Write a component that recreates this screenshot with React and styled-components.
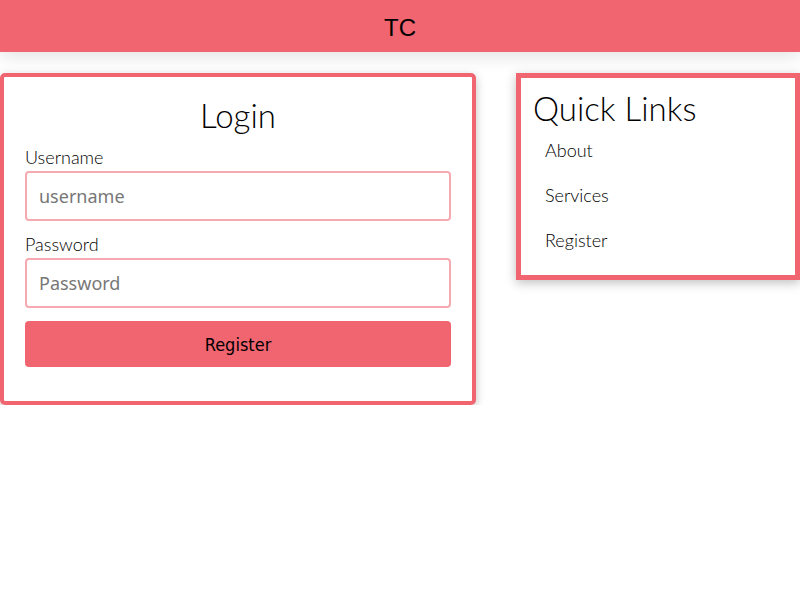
import React from 'react';
import styled, { createGlobalStyle } from 'styled-components';

const GlobalStyle = createGlobalStyle`
  body {
    margin: 0;
    background: #ffffff;
    color: #000;
    font-family: "Lato", "Open Sans", sans-serif;
  }
`;

const Header = styled.header`
  height: 52px;
  box-sizing: border-box;
  padding-top: 3px;
  background-color: #f06570;
  display: flex;
  align-items: center;
  justify-content: center;
  box-shadow: 0 4px 18px rgba(0, 0, 0, 0.12);
  font-family: "Liberation Sans", Arial, sans-serif;
  font-size: 24px;
`;

const Main = styled.main`
  display: flex;
  align-items: flex-start;
  gap: 40px;
  padding-top: 21px;
`;

const LoginCard = styled.form`
  width: 476px;
  box-sizing: border-box;
  border: 4px solid #f06570;
  border-radius: 5px;
  padding: 18px 21px 34px;
  display: flex;
  flex-direction: column;
  box-shadow: 0 3px 10px rgba(0, 0, 0, 0.25);
`;

const Title = styled.h2`
  margin: 0 0 ${({ center }) => (center ? '11px' : '0')};
  font-weight: 300;
  font-size: 33px;
  line-height: 40px;
  text-align: ${({ center }) => (center ? 'center' : 'left')};
`;

const Label = styled.label`
  font-size: 18px;
  font-weight: 300;
  line-height: 22px;
  margin-bottom: 3px;
`;

const Input = styled.input`
  height: 50px;
  box-sizing: border-box;
  border: 2px solid #f7a9b0;
  border-radius: 4px;
  padding: 0 12px;
  font-family: "Noto Sans", sans-serif;
  font-size: 18px;
  margin-bottom: 12px;
  outline: none;
  &::placeholder {
    color: #777;
  }
`;

const Button = styled.button`
  height: 46px;
  margin-top: 1px;
  border: none;
  border-radius: 4px;
  background-color: #f06570;
  font-family: "DejaVu Sans Condensed", "DejaVu Sans", sans-serif;
  font-size: 18px;
  color: #000;
`;

const LinksCard = styled.nav`
  flex: 1;
  box-sizing: border-box;
  border: 5px solid #f06570;
  padding: 10px 12px 12px;
  box-shadow: 0 3px 10px rgba(0, 0, 0, 0.25);
`;

const LinkList = styled.ul`
  list-style: none;
  margin: 0;
  padding: 0 0 0 12px;
`;

const LinkItem = styled.li`
  font-size: 18px;
  font-weight: 300;
  line-height: 45px;
`;

export default function App() {
  return (
    <>
      <GlobalStyle />
      <Header>TC</Header>
      <Main>
        <LoginCard onSubmit={e => e.preventDefault()}>
          <Title center>Login</Title>
          <Label>Username</Label>
          <Input placeholder="username" />
          <Label>Password</Label>
          <Input type="password" placeholder="Password" />
          <Button>Register</Button>
        </LoginCard>
        <LinksCard>
          <Title>Quick Links</Title>
          <LinkList>
            <LinkItem>About</LinkItem>
            <LinkItem>Services</LinkItem>
            <LinkItem>Register</LinkItem>
          </LinkList>
        </LinksCard>
      </Main>
    </>
  );
}
